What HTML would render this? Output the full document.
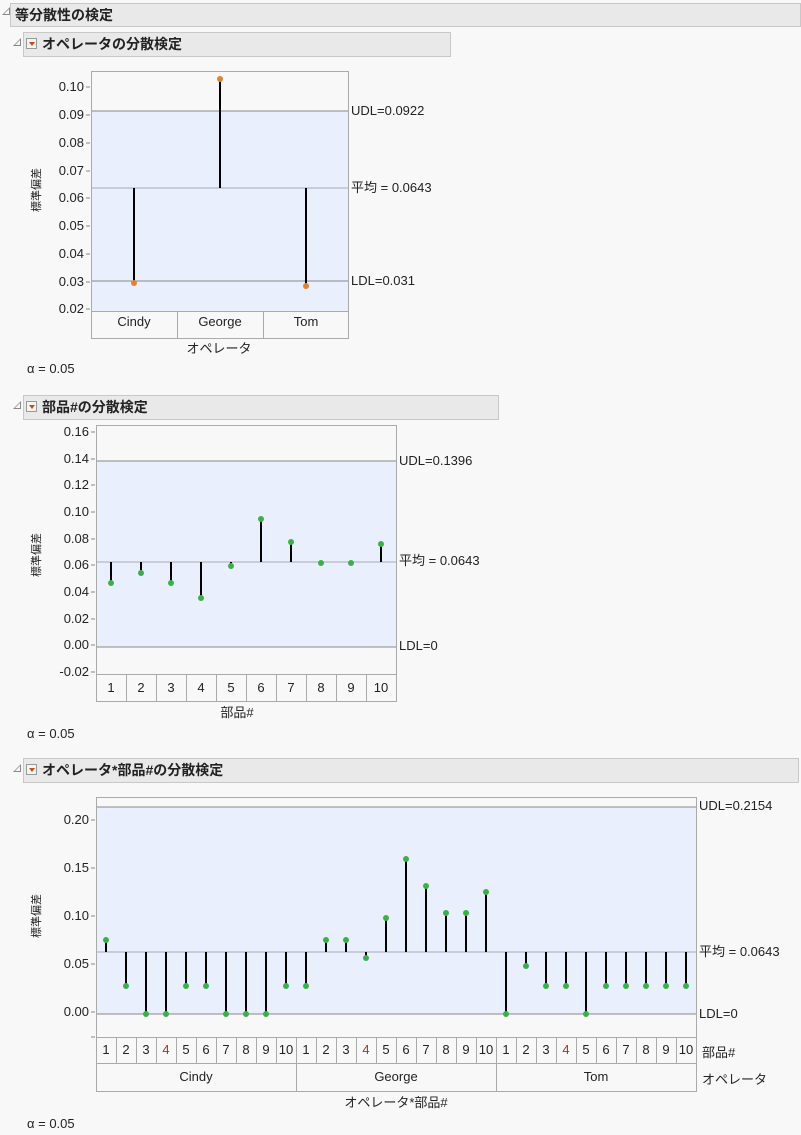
<!DOCTYPE html><html><head><meta charset="utf-8"><style>
body{margin:0;width:801px;height:1135px;background:#f8f8f8;font-family:"Liberation Sans","Noto Sans CJK JP",sans-serif;position:relative;overflow:hidden}
.h{position:absolute;background:#e9e9e9;border:1px solid #c8c8c8;box-sizing:border-box;font-weight:bold;font-size:14px;color:#222;line-height:22px}
.tri{position:absolute;width:0;height:0;border-left:8px solid transparent;border-bottom:8px solid #888}
.tri:after{content:"";position:absolute;left:-6px;top:2px;border-left:5px solid transparent;border-bottom:5px solid #f8f8f8}
.dd{position:absolute;width:11px;height:11px;border:1px solid #999;background:#f4f4f4;box-sizing:border-box}
.dd:after{content:"";position:absolute;left:2px;top:3px;border-left:3px solid transparent;border-right:3px solid transparent;border-top:4px solid #c0501a}
.a{position:absolute;font-size:13px;color:#222}
svg{position:absolute;left:0;top:0}
svg text{font-family:"Liberation Sans","Noto Sans CJK JP",sans-serif;font-size:13px;fill:#222}
</style></head><body>
<div class="tri" style="left:2px;top:7px"></div>
<div class="h" style="left:10px;top:3px;width:791px;height:24px;padding-left:4px">等分散性の検定</div>
<div class="tri" style="left:13px;top:38px"></div>
<div class="h" style="left:23px;top:32px;width:428px;height:25px;padding-left:18px">オペレータの分散検定</div>
<div class="dd" style="left:26px;top:38px"></div>
<div class="tri" style="left:13px;top:401px"></div>
<div class="h" style="left:23px;top:395px;width:476px;height:25px;padding-left:18px">部品#の分散検定</div>
<div class="dd" style="left:26px;top:401px"></div>
<div class="tri" style="left:13px;top:764px"></div>
<div class="h" style="left:23px;top:758px;width:776px;height:25px;padding-left:18px">オペレータ*部品#の分散検定</div>
<div class="dd" style="left:26px;top:764px"></div>
<div class="a" style="left:27px;top:361px">α = 0.05</div>
<div class="a" style="left:27px;top:726px">α = 0.05</div>
<div class="a" style="left:27px;top:1116px">α = 0.05</div>

<svg width="801" height="1135">
<!-- chart 1 -->
<rect x="91.5" y="71.5" width="257" height="267" fill="#f8f8f8" stroke="#aaa"/>
<rect x="92" y="111" width="256" height="200" fill="#e9effc"/>
<g stroke="#888"><line x1="92" y1="111" x2="348" y2="111"/><line x1="92" y1="188" x2="348" y2="188" stroke="#aab"/><line x1="92" y1="281" x2="348" y2="281"/></g>
<line x1="91" y1="311.5" x2="348" y2="311.5" stroke="#aaa"/>
<line x1="177.5" y1="311" x2="177.5" y2="338" stroke="#aaa"/><line x1="263.5" y1="311" x2="263.5" y2="338" stroke="#aaa"/>
<g stroke="#888"><line x1="86" y1="87" x2="90" y2="87"/><line x1="86" y1="115" x2="90" y2="115"/><line x1="86" y1="143" x2="90" y2="143"/><line x1="86" y1="171" x2="90" y2="171"/><line x1="86" y1="198" x2="90" y2="198"/><line x1="86" y1="226" x2="90" y2="226"/><line x1="86" y1="254" x2="90" y2="254"/><line x1="86" y1="282" x2="90" y2="282"/><line x1="86" y1="309" x2="90" y2="309"/></g>
<g text-anchor="end"><text x="84" y="91">0.10</text><text x="84" y="119">0.09</text><text x="84" y="147">0.08</text><text x="84" y="175">0.07</text><text x="84" y="202">0.06</text><text x="84" y="230">0.05</text><text x="84" y="258">0.04</text><text x="84" y="286">0.03</text><text x="84" y="313">0.02</text></g>
<g stroke="#000" stroke-width="2"><line x1="134" y1="188" x2="134" y2="283"/><line x1="220" y1="188" x2="220" y2="79"/><line x1="306" y1="188" x2="306" y2="286"/></g>
<g fill="#e0832e"><circle cx="134" cy="283" r="3"/><circle cx="220" cy="79" r="3"/><circle cx="306" cy="286" r="3"/></g>
<g text-anchor="middle"><text x="134" y="326">Cindy</text><text x="220" y="326">George</text><text x="306" y="326">Tom</text><text x="219" y="353">オペレータ</text></g>
<text x="351" y="115">UDL=0.0922</text><text x="351" y="192">平均 = 0.0643</text><text x="351" y="285">LDL=0.031</text>
<text transform="translate(40,190) rotate(-90)" text-anchor="middle" font-size="11" style="font-size:11px">標準偏差</text>

<!-- chart 2 -->
<rect x="96.5" y="425.5" width="300" height="276" fill="#f8f8f8" stroke="#aaa"/>
<rect x="97" y="461" width="299" height="186" fill="#e9effc"/>
<line x1="97" y1="461" x2="396" y2="461" stroke="#888"/><line x1="97" y1="562" x2="396" y2="562" stroke="#aab"/><line x1="97" y1="647" x2="396" y2="647" stroke="#888"/>
<line x1="96" y1="674.5" x2="396" y2="674.5" stroke="#aaa"/>
<g stroke="#aaa"><line x1="126.5" y1="674" x2="126.5" y2="701"/><line x1="156.5" y1="674" x2="156.5" y2="701"/><line x1="186.5" y1="674" x2="186.5" y2="701"/><line x1="216.5" y1="674" x2="216.5" y2="701"/><line x1="246.5" y1="674" x2="246.5" y2="701"/><line x1="276.5" y1="674" x2="276.5" y2="701"/><line x1="306.5" y1="674" x2="306.5" y2="701"/><line x1="336.5" y1="674" x2="336.5" y2="701"/><line x1="366.5" y1="674" x2="366.5" y2="701"/></g>
<g stroke="#888"><line x1="91" y1="432" x2="95" y2="432"/><line x1="91" y1="459" x2="95" y2="459"/><line x1="91" y1="485" x2="95" y2="485"/><line x1="91" y1="512" x2="95" y2="512"/><line x1="91" y1="539" x2="95" y2="539"/><line x1="91" y1="565" x2="95" y2="565"/><line x1="91" y1="592" x2="95" y2="592"/><line x1="91" y1="619" x2="95" y2="619"/><line x1="91" y1="645" x2="95" y2="645"/><line x1="91" y1="672" x2="95" y2="672"/></g>
<g text-anchor="end"><text x="89" y="436">0.16</text><text x="89" y="463">0.14</text><text x="89" y="489">0.12</text><text x="89" y="516">0.10</text><text x="89" y="543">0.08</text><text x="89" y="569">0.06</text><text x="89" y="596">0.04</text><text x="89" y="623">0.02</text><text x="89" y="649">0.00</text><text x="89" y="676">-0.02</text></g>
<g stroke="#000" stroke-width="2"><line x1="111" y1="562" x2="111" y2="583"/><line x1="141" y1="562" x2="141" y2="573"/><line x1="171" y1="562" x2="171" y2="583"/><line x1="201" y1="562" x2="201" y2="598"/><line x1="231" y1="562" x2="231" y2="566"/><line x1="261" y1="562" x2="261" y2="519"/><line x1="291" y1="562" x2="291" y2="542"/><line x1="321" y1="562" x2="321" y2="563"/><line x1="351" y1="562" x2="351" y2="563"/><line x1="381" y1="562" x2="381" y2="544"/></g>
<g fill="#3bb04a"><circle cx="111" cy="583" r="3"/><circle cx="141" cy="573" r="3"/><circle cx="171" cy="583" r="3"/><circle cx="201" cy="598" r="3"/><circle cx="231" cy="566" r="3"/><circle cx="261" cy="519" r="3"/><circle cx="291" cy="542" r="3"/><circle cx="321" cy="563" r="3"/><circle cx="351" cy="563" r="3"/><circle cx="381" cy="544" r="3"/></g>
<g text-anchor="middle"><text x="111" y="692">1</text><text x="141" y="692">2</text><text x="171" y="692">3</text><text x="201" y="692">4</text><text x="231" y="692">5</text><text x="261" y="692">6</text><text x="291" y="692">7</text><text x="321" y="692">8</text><text x="351" y="692">9</text><text x="381" y="692">10</text><text x="237" y="717">部品#</text></g>
<text x="399" y="465">UDL=0.1396</text><text x="399" y="565">平均 = 0.0643</text><text x="399" y="650">LDL=0</text>
<text transform="translate(40,555) rotate(-90)" text-anchor="middle" style="font-size:11px">標準偏差</text>

<!-- chart 3 -->
<rect x="96.5" y="797.5" width="600" height="294" fill="#f8f8f8" stroke="#aaa"/>
<rect x="97" y="807" width="599" height="207" fill="#e9effc"/>
<line x1="97" y1="807" x2="696" y2="807" stroke="#888"/><line x1="97" y1="952" x2="696" y2="952" stroke="#aab"/><line x1="97" y1="1014" x2="696" y2="1014" stroke="#888"/>
<line x1="96" y1="1037.5" x2="696" y2="1037.5" stroke="#aaa"/><line x1="96" y1="1063.5" x2="696" y2="1063.5" stroke="#aaa"/>
<g stroke="#aaa"><line x1="116.5" y1="1037" x2="116.5" y2="1063"/><line x1="136.5" y1="1037" x2="136.5" y2="1063"/><line x1="156.5" y1="1037" x2="156.5" y2="1063"/><line x1="176.5" y1="1037" x2="176.5" y2="1063"/><line x1="196.5" y1="1037" x2="196.5" y2="1063"/><line x1="216.5" y1="1037" x2="216.5" y2="1063"/><line x1="236.5" y1="1037" x2="236.5" y2="1063"/><line x1="256.5" y1="1037" x2="256.5" y2="1063"/><line x1="276.5" y1="1037" x2="276.5" y2="1063"/><line x1="296.5" y1="1037" x2="296.5" y2="1091"/><line x1="316.5" y1="1037" x2="316.5" y2="1063"/><line x1="336.5" y1="1037" x2="336.5" y2="1063"/><line x1="356.5" y1="1037" x2="356.5" y2="1063"/><line x1="376.5" y1="1037" x2="376.5" y2="1063"/><line x1="396.5" y1="1037" x2="396.5" y2="1063"/><line x1="416.5" y1="1037" x2="416.5" y2="1063"/><line x1="436.5" y1="1037" x2="436.5" y2="1063"/><line x1="456.5" y1="1037" x2="456.5" y2="1063"/><line x1="476.5" y1="1037" x2="476.5" y2="1063"/><line x1="496.5" y1="1037" x2="496.5" y2="1091"/><line x1="516.5" y1="1037" x2="516.5" y2="1063"/><line x1="536.5" y1="1037" x2="536.5" y2="1063"/><line x1="556.5" y1="1037" x2="556.5" y2="1063"/><line x1="576.5" y1="1037" x2="576.5" y2="1063"/><line x1="596.5" y1="1037" x2="596.5" y2="1063"/><line x1="616.5" y1="1037" x2="616.5" y2="1063"/><line x1="636.5" y1="1037" x2="636.5" y2="1063"/><line x1="656.5" y1="1037" x2="656.5" y2="1063"/><line x1="676.5" y1="1037" x2="676.5" y2="1063"/></g>
<g stroke="#888"><line x1="91" y1="820" x2="95" y2="820"/><line x1="91" y1="868" x2="95" y2="868"/><line x1="91" y1="916" x2="95" y2="916"/><line x1="91" y1="964" x2="95" y2="964"/><line x1="91" y1="1012" x2="95" y2="1012"/><line x1="91" y1="1037" x2="95" y2="1037"/></g>
<g text-anchor="end"><text x="89" y="824">0.20</text><text x="89" y="872">0.15</text><text x="89" y="920">0.10</text><text x="89" y="968">0.05</text><text x="89" y="1016">0.00</text></g>
<g stroke="#000" stroke-width="2">
<line x1="106" y1="952" x2="106" y2="940"/><line x1="126" y1="952" x2="126" y2="986"/><line x1="146" y1="952" x2="146" y2="1014"/><line x1="166" y1="952" x2="166" y2="1014"/><line x1="186" y1="952" x2="186" y2="986"/><line x1="206" y1="952" x2="206" y2="986"/><line x1="226" y1="952" x2="226" y2="1014"/><line x1="246" y1="952" x2="246" y2="1014"/><line x1="266" y1="952" x2="266" y2="1014"/><line x1="286" y1="952" x2="286" y2="986"/>
<line x1="306" y1="952" x2="306" y2="986"/><line x1="326" y1="952" x2="326" y2="940"/><line x1="346" y1="952" x2="346" y2="940"/><line x1="366" y1="952" x2="366" y2="958"/><line x1="386" y1="952" x2="386" y2="918"/><line x1="406" y1="952" x2="406" y2="859"/><line x1="426" y1="952" x2="426" y2="886"/><line x1="446" y1="952" x2="446" y2="913"/><line x1="466" y1="952" x2="466" y2="913"/><line x1="486" y1="952" x2="486" y2="892"/>
<line x1="506" y1="952" x2="506" y2="1014"/><line x1="526" y1="952" x2="526" y2="966"/><line x1="546" y1="952" x2="546" y2="986"/><line x1="566" y1="952" x2="566" y2="986"/><line x1="586" y1="952" x2="586" y2="1014"/><line x1="606" y1="952" x2="606" y2="986"/><line x1="626" y1="952" x2="626" y2="986"/><line x1="646" y1="952" x2="646" y2="986"/><line x1="666" y1="952" x2="666" y2="986"/><line x1="686" y1="952" x2="686" y2="986"/></g>
<g fill="#3bb04a">
<circle cx="106" cy="940" r="3"/><circle cx="126" cy="986" r="3"/><circle cx="146" cy="1014" r="3"/><circle cx="166" cy="1014" r="3"/><circle cx="186" cy="986" r="3"/><circle cx="206" cy="986" r="3"/><circle cx="226" cy="1014" r="3"/><circle cx="246" cy="1014" r="3"/><circle cx="266" cy="1014" r="3"/><circle cx="286" cy="986" r="3"/>
<circle cx="306" cy="986" r="3"/><circle cx="326" cy="940" r="3"/><circle cx="346" cy="940" r="3"/><circle cx="366" cy="958" r="3"/><circle cx="386" cy="918" r="3"/><circle cx="406" cy="859" r="3"/><circle cx="426" cy="886" r="3"/><circle cx="446" cy="913" r="3"/><circle cx="466" cy="913" r="3"/><circle cx="486" cy="892" r="3"/>
<circle cx="506" cy="1014" r="3"/><circle cx="526" cy="966" r="3"/><circle cx="546" cy="986" r="3"/><circle cx="566" cy="986" r="3"/><circle cx="586" cy="1014" r="3"/><circle cx="606" cy="986" r="3"/><circle cx="626" cy="986" r="3"/><circle cx="646" cy="986" r="3"/><circle cx="666" cy="986" r="3"/><circle cx="686" cy="986" r="3"/></g>
<g text-anchor="middle">
<text x="106" y="1054">1</text><text x="126" y="1054">2</text><text x="146" y="1054">3</text><text x="166" y="1054" style="fill:#a33">4</text><text x="186" y="1054">5</text><text x="206" y="1054">6</text><text x="226" y="1054">7</text><text x="246" y="1054">8</text><text x="266" y="1054">9</text><text x="286" y="1054">10</text>
<text x="306" y="1054">1</text><text x="326" y="1054">2</text><text x="346" y="1054">3</text><text x="366" y="1054" style="fill:#a33">4</text><text x="386" y="1054">5</text><text x="406" y="1054">6</text><text x="426" y="1054">7</text><text x="446" y="1054">8</text><text x="466" y="1054">9</text><text x="486" y="1054">10</text>
<text x="506" y="1054">1</text><text x="526" y="1054">2</text><text x="546" y="1054">3</text><text x="566" y="1054" style="fill:#a33">4</text><text x="586" y="1054">5</text><text x="606" y="1054">6</text><text x="626" y="1054">7</text><text x="646" y="1054">8</text><text x="666" y="1054">9</text><text x="686" y="1054">10</text>
<text x="196" y="1081">Cindy</text><text x="396" y="1081">George</text><text x="596" y="1081">Tom</text><text x="396" y="1107">オペレータ*部品#</text></g>
<text x="699" y="810">UDL=0.2154</text><text x="699" y="956">平均 = 0.0643</text><text x="699" y="1018">LDL=0</text>
<text x="702" y="1057">部品#</text><text x="702" y="1084">オペレータ</text>
<text transform="translate(40,916) rotate(-90)" text-anchor="middle" style="font-size:11px">標準偏差</text>
</svg>
</body></html>
